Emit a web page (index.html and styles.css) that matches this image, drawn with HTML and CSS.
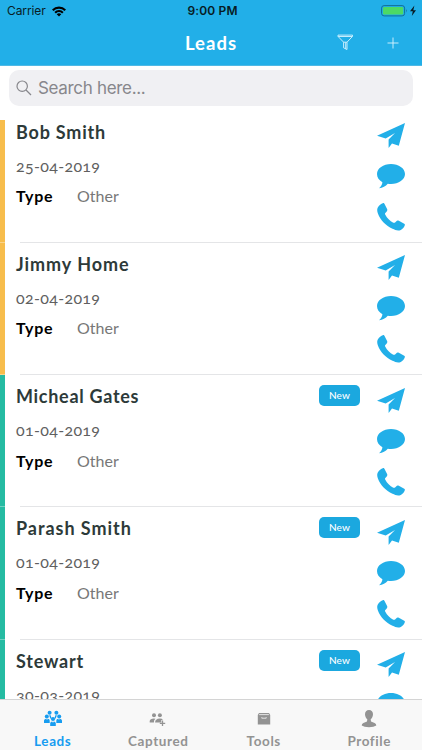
FILE: index.html
```html
<!DOCTYPE html>
<html lang="en">
<head>
<meta charset="utf-8">
<title>Leads</title>
<link rel="stylesheet" href="styles.css">
</head>
<body>
<svg class="defs" width="0" height="0" aria-hidden="true">
  <symbol id="send" viewBox="0 0 28 26"><path d="M28 0 21.8 22.8 15 20.4 11.6 25V16.5L18 10 8.700 15.600 0 12.800Z"/></symbol>
  <symbol id="chat" viewBox="0 0 28 25"><path d="M14 0C6.300 0 0 4.400 0 10c0 3.500 2 6.300 5.400 8.200C5.200 20.500 4 22.500 2 24.300c3.800-.4 6.600-2 8.800-4.500 1 .2 2.100.2 3.200.2 7.700 0 14-4.400 14-10S21.700 0 14 0Z"/></symbol>
  <symbol id="phone" viewBox="0 0 28 28"><path d="M.8 4.400C2 2.200 4 .8 6.200 0c.8 0 1.200.6 1.600 1.400l2.300 4.700c.5 1.200.1 2-.8 2.800-1 .9-1.700 1.500-1 2.900 1.800 3.500 4.500 6.100 8 7.900 1.200.5 1.900-.2 2.800-1.200.8-.9 1.600-1.200 2.700-.7l5 2.600c.9.500 1.300 1 1 1.900-.7 2.100-2 3.700-4 4.600-2.700 1.100-5.600.2-8.300-1.100C8.800 22.500 3.400 17.300.9 10.500.2 8.500-.2 6.300.8 4.400Z"/></symbol>
</svg>
<div class="screen">
  <header class="top">
    <div class="status">
      <div class="carrier"><span>Carrier</span>
        <svg class="wifi" viewBox="0 0 14 11"><path d="M0 3.400a10 10 0 0 1 14 0L12.500 5a7.900 7.900 0 0 0-11 0ZM2.400 5.900a6.600 6.600 0 0 1 9.200 0l-1.500 1.500a4.500 4.500 0 0 0-6.200 0ZM4.700 8.300a3.300 3.300 0 0 1 4.600 0L7 10.600Z"/></svg>
      </div>
      <div class="clock">9:00 PM</div>
      <div class="power">
        <svg width="36" height="12" viewBox="0 0 36 12"><rect x=".6" y=".6" width="23" height="10.300" rx="2.500" fill="none" stroke="#126f98"/><rect x="2" y="2" width="20.200" height="7.500" rx="1.200" fill="#4cd964"/><path d="M25 4q1.500 1.700 0 3.500Z" fill="#126f98"/><path d="M33.400.6 29 6.300h2.800l-1 4.800L35 5.200h-2.700Z" fill="#081c24"/></svg>
      </div>
    </div>
    <div class="nav">
      <h1>Leads</h1>
      <div class="actions">
        <svg width="17" height="17" viewBox="0 0 17 17"><path d="M1 1.100h14.500v1.300L10 8.200V15.500L6.600 13.800V8.200L1 2.400ZM1.200 2.500h14M6.600 8.200H10M8.700 8.400v6.400"/></svg>
        <svg width="12" height="12" viewBox="0 0 12 12"><path d="M.5 6h11M6 .5v11"/></svg>
      </div>
    </div>
  </header>
  <div class="search-wrap"><div class="search">
    <svg width="16" height="16" viewBox="0 0 16 16"><circle cx="6.200" cy="6.200" r="5.200"/><path d="m10 10 5 5"/></svg>
    <span>Search here...</span>
  </div></div>
  <main class="list"><div class="rows">
    <article class="lead amber">
      <div class="info"><h2>Bob Smith</h2><p class="date">25-04-2019</p><p class="kind"><b>Type</b><span>Other</span></p></div>
      <div class="tools"><svg class="send"><use href="#send"/></svg><svg class="chat"><use href="#chat"/></svg><svg class="phone"><use href="#phone"/></svg></div>
    </article>
    <article class="lead amber">
      <div class="info"><h2 class="wide">Jimmy Home</h2><p class="date">02-04-2019</p><p class="kind"><b>Type</b><span>Other</span></p></div>
      <div class="tools"><svg class="send"><use href="#send"/></svg><svg class="chat"><use href="#chat"/></svg><svg class="phone"><use href="#phone"/></svg></div>
    </article>
    <article class="lead teal">
      <div class="info"><h2 class="snug">Micheal Gates</h2><p class="date">01-04-2019</p><p class="kind"><b>Type</b><span>Other</span></p></div>
      <span class="badge">New</span>
      <div class="tools"><svg class="send"><use href="#send"/></svg><svg class="chat"><use href="#chat"/></svg><svg class="phone"><use href="#phone"/></svg></div>
    </article>
    <article class="lead teal">
      <div class="info"><h2 class="wide">Parash Smith</h2><p class="date">01-04-2019</p><p class="kind"><b>Type</b><span>Other</span></p></div>
      <span class="badge">New</span>
      <div class="tools"><svg class="send"><use href="#send"/></svg><svg class="chat"><use href="#chat"/></svg><svg class="phone"><use href="#phone"/></svg></div>
    </article>
    <article class="lead teal">
      <div class="info"><h2>Stewart</h2><p class="date">30-03-2019</p></div>
      <span class="badge">New</span>
      <div class="tools"><svg class="send"><use href="#send"/></svg><svg class="chat"><use href="#chat"/></svg></div>
    </article>
  </div></main>
  <nav class="tabs">
    <div class="tab active"><svg width="18" height="18" viewBox="0 0 18 18"><circle cx="5.600" cy="2.700" r="2"/><circle cx="12.400" cy="2.700" r="2"/><circle cx="2.800" cy="6.500" r="2"/><circle cx="15.200" cy="6.500" r="2"/><circle cx="9" cy="9" r="2.100"/><path d="M0 13V10.500Q.3 8.800 2.300 8.800L3 10l.8-1.200Q5.600 9 5.700 10.500V13ZM12.300 13V10.500Q12.400 9 14.200 8.800L15 10l.7-1.200Q17.700 8.800 18 10.500V13ZM6.200 16v-2.700q.2-1.600 2-1.800L9 12.800l.8-1.300q1.800.2 2 1.800V16ZM5.100 5.200l1.600.1.700 2.600-1 .8ZM12.900 5.200l-1.600.1-.7 2.600 1 .8Z"/></svg><span>Leads</span></div>
    <div class="tab"><svg width="18" height="18" viewBox="0 0 18 18"><circle cx="5" cy="5.300" r="2"/><circle cx="10.900" cy="5.300" r="2"/><path d="M.7 12.500v-1.400q.3-2.200 4.200-2.500l1.600.2q-1.800 1.100-1.600 3.700ZM6.100 12.500q0-3.600 4.700-3.900 2.600 0 3 1.300h-1.500v2.600Z"/><path d="M13.500 10.500v5.500M10.800 13.300h5.400" fill="none" stroke="currentColor" stroke-width="1.300"/></svg><span>Captured</span></div>
    <div class="tab"><svg width="18" height="18" viewBox="0 0 18 18"><path d="M4 3h10l1.200 2v9.500H2.800V5Z"/><path d="M4.100 4.600h9.800M6.800 7.200v1h4.400v-1" fill="none" stroke="#f8f8f8" stroke-width=".8"/></svg><span>Tools</span></div>
    <div class="tab"><svg width="18" height="18" viewBox="0 0 18 18"><path d="M9 0C6.500 0 5 1.700 5 4.200c0 2.100 1.100 4 2.300 5.100L7 11.500 3.400 13Q1.700 13.700 1.700 15.500 4 17.300 9 17.300t7.300-1.800q0-1.800-1.700-2.500L11 11.500l-.3-2.200C11.900 8.200 13 6.300 13 4.200 13 1.700 11.500 0 9 0Z"/></svg><span>Profile</span></div>
  </nav>
</div>
</body>
</html>
```
FILE: styles.css
```css
* { box-sizing: border-box; margin: 0; padding: 0; }
body { background: #fff; font-family: Lato, "Open Sans", sans-serif; }
svg { display: block; flex: none; }
.defs { position: absolute; }
.screen { width: 422px; height: 750px; display: flex; flex-direction: column; overflow: hidden; }
.top { height: 66px; flex: none; background: #22afe8; border-bottom: 1px solid #50b9e5; }
.status { height: 22px; display: grid; grid-template-columns: 1fr auto 1fr; align-items: center; font: 12px/22px Inter, sans-serif; color: #081c24; }
.carrier { display: flex; align-items: center; gap: 6px; padding-left: 7px; letter-spacing: -.1px; }
.wifi { width: 14px; height: 11px; }
.clock { font-weight: 600; letter-spacing: .15px; padding-left: 3px; }
.power { display: flex; justify-content: flex-end; padding-right: 5px; }
.nav { height: 43px; display: grid; grid-template-columns: 1fr auto 1fr; align-items: center; color: #fff; }
.nav h1 { grid-column: 2; font-size: 18.5px; line-height: 22px; font-weight: 700; letter-spacing: 1px; margin-top: -2px; }
.actions { display: flex; align-items: center; justify-content: flex-end; gap: 33px; padding-right: 23px; margin-top: -2px; }
.actions svg { fill: none; stroke: #d9f4ff; stroke-width: .9; }
.search-wrap { height: 54px; flex: none; padding: 4px 9px 0; }
.search { height: 36px; display: flex; align-items: center; gap: 6px; padding-left: 7px; border-radius: 10px; background: #f0f0f3; color: #87878c; font: 17px/36px Inter, sans-serif; letter-spacing: -.32px; }
.search svg { fill: none; stroke: #87878c; stroke-width: 1.2; }
.list { height: 579px; flex: none; overflow: hidden; }
.rows { margin-top: -9.700px; }
.lead { height: 132.300px; display: flex; padding: 10.200px 17px 0 16px; background: linear-gradient(#e4e5e7, #e4e5e7) 20px 100% / 402px 1px no-repeat; position: relative; }
.lead::before { content: ""; position: absolute; left: 0; top: 0; bottom: 0; width: 5px; border-bottom: 1px solid rgba(255,255,255,.35); }
.amber::before { background: #f7bd4c; }
.teal::before { background: #25bba2; }
.info { flex: 1; }
h2 { font-size: 18px; line-height: 22px; font-weight: 700; color: #2d3a39; letter-spacing: .8px; white-space: nowrap; }
h2.wide { letter-spacing: .95px; }
h2.snug { letter-spacing: .7px; }
.date { font-size: 16px; line-height: 20px; margin-top: 13px; color: #606060; font-variant-numeric: oldstyle-nums; letter-spacing: .33px; }
.kind { display: flex; font-size: 16px; line-height: 20px; margin-top: 10.500px; color: #777; }
.kind b { width: 61px; color: #000; letter-spacing: .75px; }
.badge { width: 41px; height: 21px; margin: 0 17px 0 0; border-radius: 5px; background: #1ba8df; color: #fff; font-size: 10px; font-weight: 500; line-height: 21px; text-align: center; letter-spacing: .2px; }
.tools { width: 28px; display: flex; flex-direction: column; padding-top: 2.500px; fill: #22afe8; }
.send { width: 28px; height: 26px; }
.chat { width: 28px; height: 25px; margin-top: 15px; }
.phone { width: 28px; height: 28px; margin-top: 14px; }
.tabs { height: 51px; flex: none; display: grid; grid-template-columns: repeat(4, 1fr); border-top: 1px solid #d4d4d4; background: #f8f8f8; }
.tab { display: flex; flex-direction: column; align-items: center; padding-top: 10px; color: #939393; fill: currentColor; font-size: 13.500px; font-weight: 700; line-height: 16px; letter-spacing: .6px; }
.tab span { margin-top: 5px; }
.active { color: #179cf0; }
```
